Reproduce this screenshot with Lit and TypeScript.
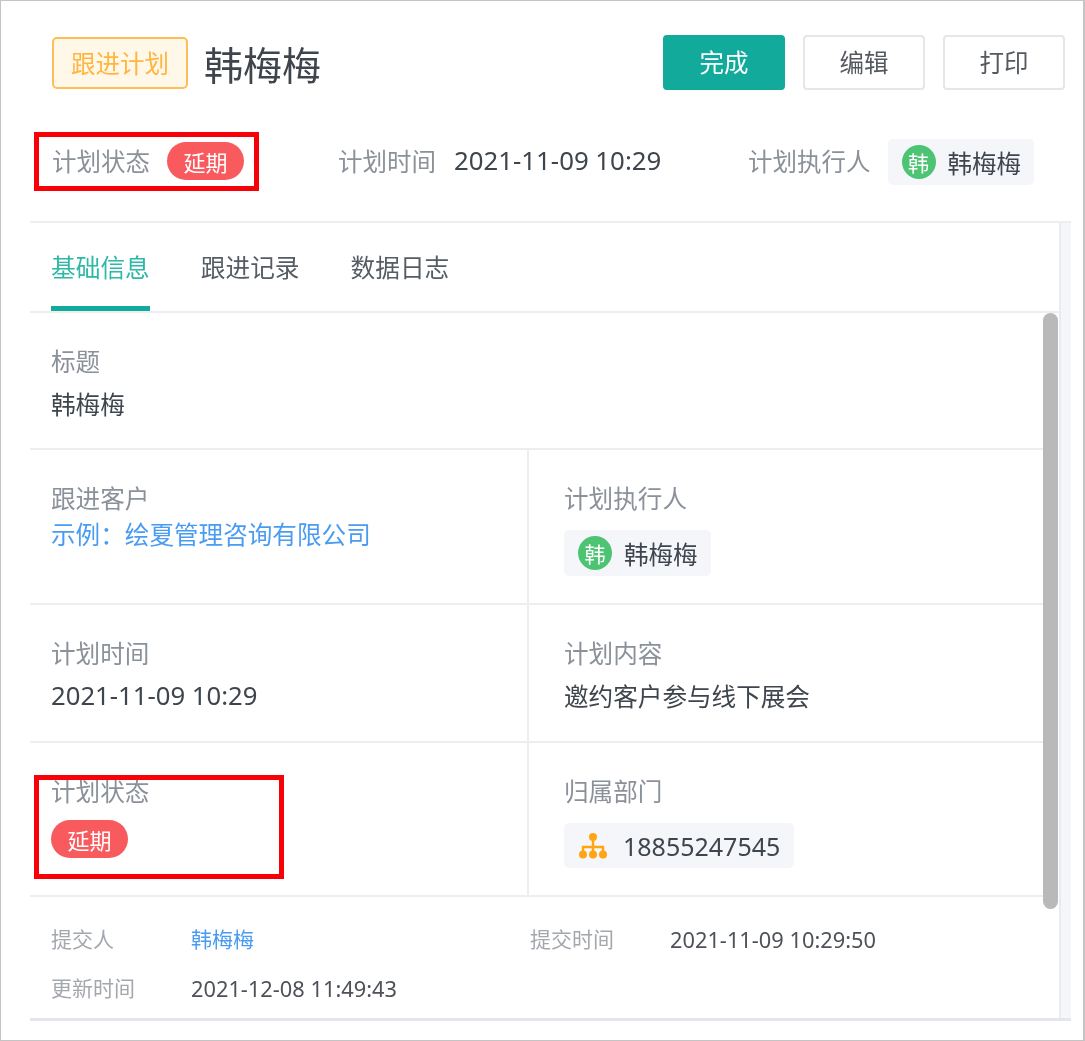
import { LitElement, html, css } from "lit";
import { customElement } from "lit/decorators.js";

@customElement("user-chip")
class UserChip extends LitElement {
  static styles = css`
    :host { display: inline-flex; align-items: center; height: 46px; box-sizing: border-box; padding: 0 13px 0 14px; gap: 12px; background: #f4f6fa; border-radius: 5px; font-size: 24.5px; color: #3f454d; }
    .av { width: 34px; height: 34px; border-radius: 50%; background: #4cc473; color: #fff; font-size: 21px; display: flex; align-items: center; justify-content: center; }
  `;
  render() { return html`<span class="av">韩</span><span>韩梅梅</span>`; }
}

@customElement("app-root")
class AppRoot extends LitElement {
  static styles = css`
    :host { display: block; width: 1085px; height: 1041px; font-family: "Noto Sans CJK SC", "Noto Sans", sans-serif; color: #3f454d; background: #fff; overflow: hidden; }
    .frame { position: relative; box-sizing: border-box; width: 1085px; height: 1041px; border: 1px solid #c4c4c4; border-right-width: 2px; padding: 34px 0 0 29px; filter: blur(0.6px); }
    .head { display: flex; align-items: center; height: 56px; padding: 0 18px 0 22px; }
    .tag { box-sizing: border-box; width: 136px; height: 52px; padding-bottom: 2px; border: 2px solid #ffbe55; border-radius: 5px; background: #fff8e9; color: #ffb540; font-size: 24.5px; display: flex; align-items: center; justify-content: center; }
    h1 { margin: 0 0 0 16px; font-size: 39px; font-weight: 400; color: #3f454d; flex: 1; line-height: 1; }
    .btn { box-sizing: border-box; align-self: flex-start; width: 122px; height: 55px; padding-bottom: 2px; border-radius: 4px; display: flex; align-items: center; justify-content: center; font-size: 24.5px; margin-left: 18px; border: 2px solid #e4e6e9; background: #fff; color: #54595f; }
    .btn.primary { background: #12ab9b; border-color: #12ab9b; color: #fff; }
    .status { display: flex; align-items: center; height: 46px; margin-top: 47px; padding-left: 22px; font-size: 24.5px; }
    .status .lab { padding-bottom: 2px; }
    .status user-chip { margin-top: 2px; }
    .lab { color: #8b9199; }
    .pill { display: inline-flex; align-items: center; justify-content: center; width: 77px; height: 38px; border-radius: 19px; background: #f85a5e; color: #fff; font-size: 22px; }
    .s1 { display: flex; align-items: center; gap: 17px; width: 286px; }
    .s2 { display: flex; align-items: center; gap: 18px; width: 410px; }
    .s2 b { font-family: "Noto Sans", "Noto Sans CJK SC", sans-serif; font-weight: 400; font-size: 25.8px; padding-bottom: 2px; color: #3f454d; }
    .s3 { display: flex; align-items: center; gap: 17px; }
    .panel { box-sizing: border-box; display: flex; width: 1041px; height: 800px; margin-top: 37px; border-top: 2px solid #eceef0; border-bottom: 3px solid #e3e6ec; }
    .main { width: 1029px; }
    .track { width: 12px; background: #f4f6f9; border-left: 2px solid #e9ebee; box-sizing: border-box; }
    .tabs { box-sizing: border-box; height: 90px; display: flex; gap: 51px; padding-left: 21px; border-bottom: 2px solid #eceef0; font-size: 24.7px; color: #565c63; }
    .tab { box-sizing: border-box; height: 88px; padding-top: 25px; line-height: 36px; }
    .tab.on { color: #2db8a7; border-bottom: 5px solid #12ab9b; }
    .scroll { display: flex; }
    .content { width: 1013px; }
    .gutter { width: 16px; }
    .thumb { width: 15px; height: 596px; background: #b9b9b9; border-radius: 8px; }
    .row { box-sizing: border-box; display: grid; grid-template-columns: 497px 1fr; border-bottom: 2px solid #eceef0; }
    .r1 { height: 137px; display: block; }
    .r2 { height: 155px; }
    .r3 { height: 138px; }
    .r4 { height: 154px; }
    .cell { box-sizing: border-box; padding: 30px 0 0 21px; font-size: 24.6px; }
    .row .cell + .cell { border-left: 2px solid #eceef0; padding-left: 35px; }
    .l { display: block; line-height: 34px; color: #8b9199; }
    .v { display: block; line-height: 34px; margin-top: 9px; color: #3f454d; }
    .r2 .v { margin-top: 2px; }
    .r3 .v { margin-top: 9px; }
    .r3 .v.num { margin-top: 10px; font-family: "Noto Sans", "Noto Sans CJK SC", sans-serif; font-size: 25.7px; }
    .link { color: #4a9cf2; }
    .r4 .pill { margin-top: 13px; }
    .cell user-chip, .dept { margin-top: 16px; }
    .dept { display: inline-flex; align-items: center; gap: 16px; height: 45px; box-sizing: border-box; padding: 0 14px 0 15px; background: #f4f6fa; border-radius: 5px; font-family: "Noto Sans", "Noto Sans CJK SC", sans-serif; font-size: 25px; color: #3f454d; }
    .foot { display: grid; grid-template-columns: 140px 339px 140px 1fr; grid-auto-rows: 49px; padding: 16px 0 0 21px; font-size: 21px; align-items: center; }
    .foot .lab { color: #a3a8af; }
    .foot .val { font-family: "Noto Sans", "Noto Sans CJK SC", sans-serif; color: #4d5259; font-size: 21.8px; padding-top: 3px; }
    .foot .link { color: #4a9cf2; }
    .red { position: absolute; box-sizing: border-box; border: 5px solid #f80008; pointer-events: none; }
    .red.a { left: 33px; top: 131px; width: 225px; height: 59px; }
    .red.b { left: 33px; top: 774px; width: 250px; height: 104px; }
  `;
  render() {
    return html`<div class="frame">
      <div class="head">
        <div class="tag">跟进计划</div>
        <h1>韩梅梅</h1>
        <div class="btn primary">完成</div>
        <div class="btn">编辑</div>
        <div class="btn">打印</div>
      </div>
      <div class="status">
        <div class="s1"><span class="lab">计划状态</span><span class="pill">延期</span></div>
        <div class="s2"><span class="lab">计划时间</span><b>2021-11-09 10:29</b></div>
        <div class="s3"><span class="lab">计划执行人</span><user-chip></user-chip></div>
      </div>
      <div class="panel">
        <div class="main">
          <div class="tabs">
            <div class="tab on">基础信息</div>
            <div class="tab">跟进记录</div>
            <div class="tab">数据日志</div>
          </div>
          <div class="scroll">
            <div class="content">
              <div class="row r1"><div class="cell"><span class="l">标题</span><span class="v">韩梅梅</span></div></div>
              <div class="row r2">
                <div class="cell"><span class="l">跟进客户</span><span class="v link">示例：绘夏管理咨询有限公司</span></div>
                <div class="cell"><span class="l">计划执行人</span><user-chip></user-chip></div>
              </div>
              <div class="row r3">
                <div class="cell"><span class="l">计划时间</span><span class="v num">2021-11-09 10:29</span></div>
                <div class="cell"><span class="l">计划内容</span><span class="v">邀约客户参与线下展会</span></div>
              </div>
              <div class="row r4">
                <div class="cell"><span class="l">计划状态</span><span class="pill">延期</span></div>
                <div class="cell"><span class="l">归属部门</span><span class="dept">
                  <svg width="28" height="26" viewBox="0 0 28 26"><g fill="#ffa514"><circle cx="14" cy="4" r="4"/><circle cx="4" cy="21.5" r="4"/><circle cx="14" cy="21.5" r="4"/><circle cx="24" cy="21.5" r="4"/></g><path d="M14 4V21M4 21V14H24V21" fill="none" stroke="#ffa514" stroke-width="2.4"/></svg>
                  <span>18855247545</span></span></div>
              </div>
              <div class="foot">
                <span class="lab">提交人</span><span class="link">韩梅梅</span>
                <span class="lab">提交时间</span><span class="val">2021-11-09 10:29:50</span>
                <span class="lab">更新时间</span><span class="val">2021-12-08 11:49:43</span>
              </div>
            </div>
            <div class="gutter"><div class="thumb"></div></div>
          </div>
        </div>
        <div class="track"></div>
      </div>
      <div class="red a"></div>
      <div class="red b"></div>
    </div>`;
  }
}
